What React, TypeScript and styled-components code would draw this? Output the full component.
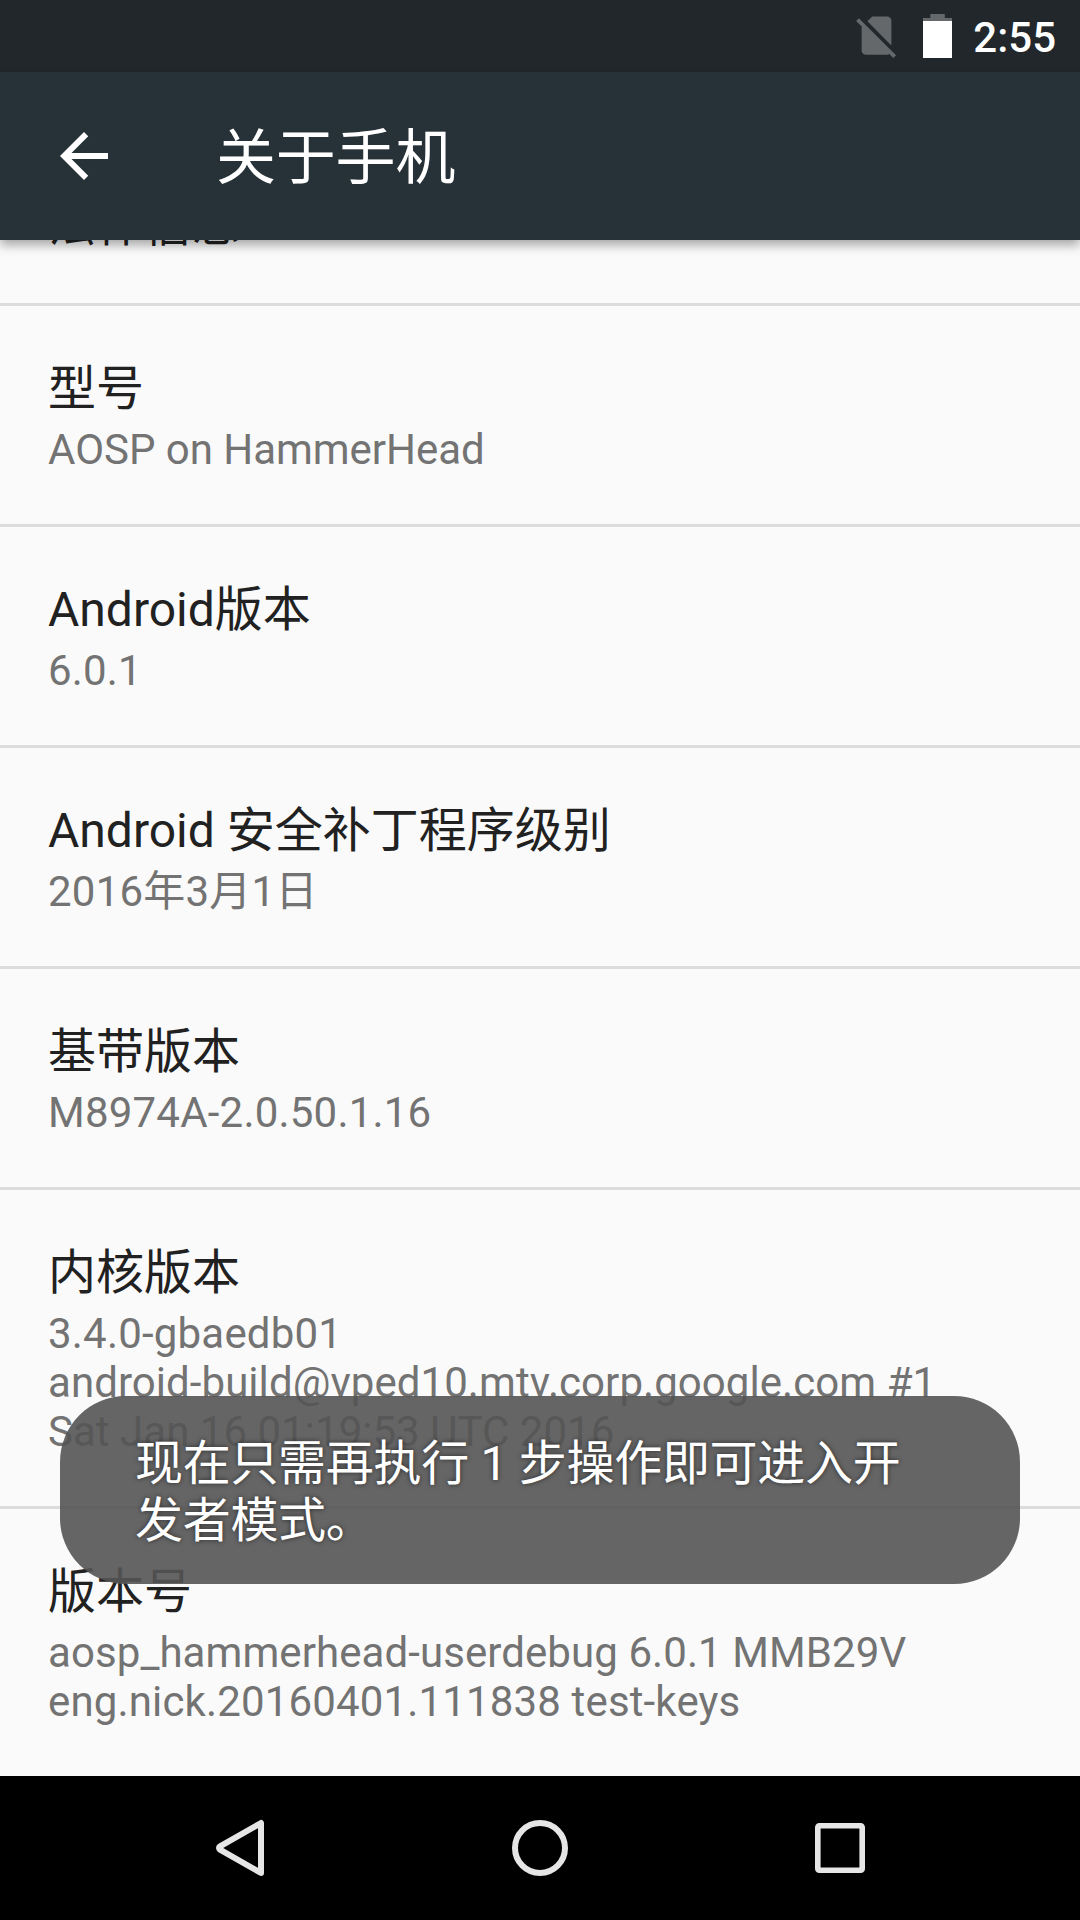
import React from "react";
import styled, { createGlobalStyle } from "styled-components";

const GlobalStyle = createGlobalStyle`
  body {
    margin: 0;
    background: #fafafa;
    font-family: Roboto, "Noto Sans CJK SC", sans-serif;
  }
`;

const Screen = styled.div`
  position: relative;
  display: flex;
  flex-direction: column;
  width: 1080px;
  height: 1920px;
  overflow: hidden;
  background: #fafafa;
`;

const StatusBar = styled.header`
  display: flex;
  flex: none;
  justify-content: flex-end;
  align-items: flex-start;
  height: 72px;
  padding-right: 24px;
  box-sizing: border-box;
  background: #21272b;
`;

const SimIcon = styled.svg`
  width: 51px;
  height: 51px;
  margin: 10px 21px 0 0;
  fill: #64686b;
`;

const BatteryIcon = styled.svg`
  width: 29px;
  height: 44px;
  margin: 14px 21px 0 0;
`;

const Clock = styled.time`
  font-size: 42px;
  font-weight: 500;
  line-height: 76px;
  color: #fff;
`;

const Toolbar = styled.div`
  position: relative;
  z-index: 1;
  display: flex;
  flex: none;
  align-items: center;
  height: 168px;
  padding-left: 48px;
  box-sizing: border-box;
  background: #263238;
  box-shadow: 0 5px 10px rgba(0, 0, 0, 0.34);
`;

const BackIcon = styled.svg`
  width: 72px;
  height: 72px;
  margin-right: 96px;
  fill: #fff;
`;

const Title = styled.h1`
  margin: 0;
  padding-top: 6px;
  font-size: 60px;
  font-weight: 400;
  line-height: 72px;
  letter-spacing: -0.2px;
  color: #fff;
`;

const List = styled.main`
  display: flex;
  flex: 1;
  min-height: 0;
  flex-direction: column;
  justify-content: flex-end;
  overflow: hidden;
`;

const Row = styled.section`
  flex: none;
  padding: 51px 48px 50px;
  border-bottom: 3px solid #dcdcdc;

  &:last-child {
    border-bottom: 0;
  }
`;

const LegalRow = styled(Row)`
  padding-bottom: 42px;
`;

const RowTitle = styled.h2`
  margin: 0 0 4px;
  font-size: 48px;
  font-weight: 400;
  line-height: 64px;
  color: #212121;
`;

const SummaryLine = styled.p<{ $tracking: number }>`
  margin: 0;
  font-size: 42px;
  line-height: 49px;
  letter-spacing: ${(p) => p.$tracking}px;
  white-space: nowrap;
  color: #737373;
`;

const Toast = styled.div`
  position: absolute;
  z-index: 2;
  left: 60px;
  top: 1396px;
  width: 960px;
  height: 188px;
  padding: 39px 75px;
  box-sizing: border-box;
  border-radius: 66px;
  background: rgba(84, 84, 84, 0.9);
  font-size: 48px;
  line-height: 57px;
  letter-spacing: -0.3px;
  white-space: pre-line;
  color: #fff;
  text-shadow: 0 0 5px rgba(0, 0, 0, 0.6);
`;

const NavBar = styled.nav`
  display: flex;
  flex: none;
  justify-content: center;
  align-items: center;
  gap: 200px;
  height: 144px;
  background: #000;
`;

const NavIcon = styled.svg`
  width: 100px;
  height: 100px;
  fill: none;
  stroke: #e6e6e6;
  stroke-linejoin: round;
`;

type Line = { text: string; tracking: number };
type Info = { title: string; lines: Line[] };

const rows: Info[] = [
  { title: "型号", lines: [{ text: "AOSP on HammerHead", tracking: -0.03 }] },
  { title: "Android版本", lines: [{ text: "6.0.1", tracking: 0.15 }] },
  { title: "Android 安全补丁程序级别", lines: [{ text: "2016年3月1日", tracking: 0.22 }] },
  { title: "基带版本", lines: [{ text: "M8974A-2.0.50.1.16", tracking: 0.21 }] },
  {
    title: "内核版本",
    lines: [
      { text: "3.4.0-gbaedb01", tracking: 0.2 },
      { text: "android-build@vped10.mtv.corp.google.com #1", tracking: 0.06 },
      { text: "Sat Jan 16 01:19:53 UTC 2016", tracking: 0.03 },
    ],
  },
  {
    title: "版本号",
    lines: [
      { text: "aosp_hammerhead-userdebug 6.0.1 MMB29V", tracking: 0.08 },
      { text: "eng.nick.20160401.111838 test-keys", tracking: 0.15 },
    ],
  },
];

export default function App() {
  return (
    <>
      <GlobalStyle />
      <Screen>
        <StatusBar>
          <SimIcon viewBox="0 0 24 24">
            <path d="M19 5c0-1.100-.9-2-2-2h-7L7.700 5.300 19 16.700V5zM3.700 3.900L2.400 5.200 5 7.800V19c0 1.100.9 2 2 2h10c.4 0 .7-.1 1-.3l1.900 1.900 1.300-1.300L3.700 3.900z" />
          </SimIcon>
          <BatteryIcon viewBox="0 0 29 44">
            <path fill="#64686b" d="M7.300 0h14.500v4H29v4H0V4h7.300z" />
            <path fill="#fff" d="M0 7h29v37H0z" />
          </BatteryIcon>
          <Clock>2:55</Clock>
        </StatusBar>
        <Toolbar>
          <BackIcon viewBox="0 0 24 24">
            <path d="M20 11H7.830l5.590-5.590L12 4l-8 8 8 8 1.410-1.410L7.830 13H20v-2z" />
          </BackIcon>
          <Title>关于手机</Title>
        </Toolbar>
        <List>
          <LegalRow>
            <RowTitle>法律信息</RowTitle>
          </LegalRow>
          {rows.map((row) => (
            <Row key={row.title}>
              <RowTitle>{row.title}</RowTitle>
              {row.lines.map((line) => (
                <SummaryLine key={line.text} $tracking={line.tracking}>
                  {line.text}
                </SummaryLine>
              ))}
            </Row>
          ))}
        </List>
        <NavBar>
          <NavIcon viewBox="0 0 100 100">
            <path strokeWidth="6" d="M71 25V75L30 51.700Q28 50 30 48.300Z" />
          </NavIcon>
          <NavIcon viewBox="0 0 100 100">
            <circle cx="50" cy="50" r="25" strokeWidth="6" />
          </NavIcon>
          <NavIcon viewBox="0 0 100 100">
            <rect x="27.800" y="27.800" width="44.400" height="44.400" rx="1.500" strokeWidth="5.600" />
          </NavIcon>
        </NavBar>
        <Toast role="status">{"现在只需再执行 1 步操作即可进入开\n发者模式。"}</Toast>
      </Screen>
    </>
  );
}
